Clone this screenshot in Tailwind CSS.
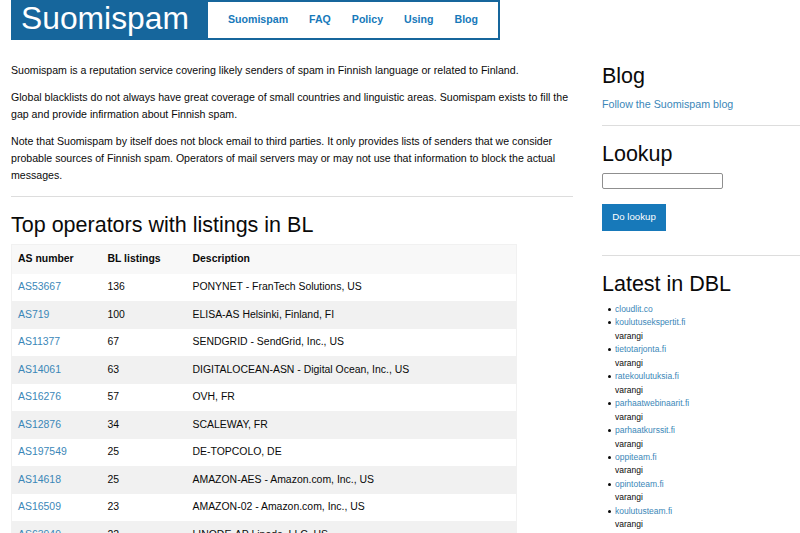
<!DOCTYPE html>
<html><head><meta charset="utf-8"><script src="https://cdn.jsdelivr.net/npm/@tailwindcss/browser@4"></script></head>
<body class="bg-white text-[#0a0a0a] font-['Liberation_Sans',Arial,sans-serif] text-[11px] h-[533px] overflow-hidden">
<div class="flex h-[533px] overflow-hidden pl-[11px] gap-[29px]">
<main class="w-[562px] shrink-0">
<header class="w-[489px] h-[40px] bg-[#16669c] flex items-center p-[2px] pr-[2px]">
<div class="w-[195px] text-white text-[31.8px] leading-[36px] pl-[8px] -mt-[4px]">Suomispam</div>
<nav class="flex-1 h-[36px] bg-white flex items-center gap-[21px] pl-[20px] text-[#1779ba] font-bold text-[10.6px]">
<a>Suomispam</a><a>FAQ</a><a>Policy</a><a>Using</a><a>Blog</a></nav>
</header>
<p class="mt-[22px] leading-[17px] text-[10.6px]">Suomispam is a reputation service covering likely senders of spam in Finnish language or related to Finland.</p>
<p class="mt-[10px] leading-[17px] text-[10.6px]">Global blacklists do not always have great coverage of small countries and linguistic areas. Suomispam exists to fill the gap and provide infirmation about Finnish spam.</p>
<p class="mt-[10px] leading-[17px] text-[10.6px]">Note that Suomispam by itself does not block email to third parties. It only provides lists of senders that we consider probable sources of Finnish spam. Operators of mail servers may or may not use that information to block the actual messages.</p>
<hr class="mt-[12px] border-[#dddddd]">
<h2 class="mt-[14px] text-[21.5px] leading-[29px]">Top operators with listings in BL</h2>
<table class="mt-[4px] w-[506px] border border-[#f1f1f1] border-collapse text-[10.45px] table-fixed">
<thead class="bg-[#f8f8f8]"><tr class="h-[29px]"><th class="w-[89px] text-left pl-[6px] font-bold">AS number</th><th class="w-[85px] text-left pl-[7px] font-bold">BL listings</th><th class="text-left pl-[7px] font-bold">Description</th></tr></thead>
<tbody>
<tr class="h-[27.5px]"><td class="pl-[6px] text-[#3b87b8]">AS53667</td><td class="pl-[7px]">136</td><td class="pl-[7px]">PONYNET - FranTech Solutions, US</td></tr>
<tr class="h-[27.5px] bg-[#f1f1f1]"><td class="pl-[6px] text-[#3b87b8]">AS719</td><td class="pl-[7px]">100</td><td class="pl-[7px]">ELISA-AS Helsinki, Finland, FI</td></tr>
<tr class="h-[27.5px]"><td class="pl-[6px] text-[#3b87b8]">AS11377</td><td class="pl-[7px]">67</td><td class="pl-[7px]">SENDGRID - SendGrid, Inc., US</td></tr>
<tr class="h-[27.5px] bg-[#f1f1f1]"><td class="pl-[6px] text-[#3b87b8]">AS14061</td><td class="pl-[7px]">63</td><td class="pl-[7px]">DIGITALOCEAN-ASN - Digital Ocean, Inc., US</td></tr>
<tr class="h-[27.5px]"><td class="pl-[6px] text-[#3b87b8]">AS16276</td><td class="pl-[7px]">57</td><td class="pl-[7px]">OVH, FR</td></tr>
<tr class="h-[27.5px] bg-[#f1f1f1]"><td class="pl-[6px] text-[#3b87b8]">AS12876</td><td class="pl-[7px]">34</td><td class="pl-[7px]">SCALEWAY, FR</td></tr>
<tr class="h-[27.5px]"><td class="pl-[6px] text-[#3b87b8]">AS197549</td><td class="pl-[7px]">25</td><td class="pl-[7px]">DE-TOPCOLO, DE</td></tr>
<tr class="h-[27.5px] bg-[#f1f1f1]"><td class="pl-[6px] text-[#3b87b8]">AS14618</td><td class="pl-[7px]">25</td><td class="pl-[7px]">AMAZON-AES - Amazon.com, Inc., US</td></tr>
<tr class="h-[27.5px]"><td class="pl-[6px] text-[#3b87b8]">AS16509</td><td class="pl-[7px]">23</td><td class="pl-[7px]">AMAZON-02 - Amazon.com, Inc., US</td></tr>
<tr class="h-[27.5px] bg-[#f1f1f1]"><td class="pl-[6px] text-[#3b87b8]">AS63949</td><td class="pl-[7px]">22</td><td class="pl-[7px]">LINODE-AP Linode, LLC, US</td></tr>
</tbody></table>
</main>
<aside class="flex-1 min-w-0">
<h3 class="mt-[62px] text-[21.5px] leading-[29px]">Blog</h3>
<a class="block mt-[5px] text-[#3b87b8] text-[10.7px] leading-[17px]">Follow the Suomispam blog</a>
<hr class="mt-[12px] border-[#dddddd]">
<h3 class="mt-[14px] text-[21.5px] leading-[29px]">Lookup</h3>
<input class="block mt-[4px] w-[121px] h-[16px] border border-[#8f8f8f] rounded-[2px] bg-white">
<button class="block mt-[15px] w-[64px] h-[27px] bg-[#1779ba] text-white text-[9.7px]">Do lookup</button>
<hr class="mt-[24px] border-[#dddddd]">
<h3 class="mt-[14px] text-[21.5px] leading-[29px]">Latest in DBL</h3>
<ul class="mt-[4px] pl-[13px] text-[8.5px] leading-[13.45px] [&>li]:relative [&>li]:before:absolute [&>li]:before:left-[-7.5px] [&>li]:before:top-[5px] [&>li]:before:w-[3px] [&>li]:before:h-[3px] [&>li]:before:rounded-full [&>li]:before:bg-[#0a0a0a] [&>li]:before:content-['']">
<li><a class="text-[#3b87b8]">cloudlit.co</a></li>
<li><a class="text-[#3b87b8]">koulutusekspertit.fi</a><br>varangi</li>
<li><a class="text-[#3b87b8]">tietotarjonta.fi</a><br>varangi</li>
<li><a class="text-[#3b87b8]">ratekoulutuksia.fi</a><br>varangi</li>
<li><a class="text-[#3b87b8]">parhaatwebinaarit.fi</a><br>varangi</li>
<li><a class="text-[#3b87b8]">parhaatkurssit.fi</a><br>varangi</li>
<li><a class="text-[#3b87b8]">oppiteam.fi</a><br>varangi</li>
<li><a class="text-[#3b87b8]">opintoteam.fi</a><br>varangi</li>
<li><a class="text-[#3b87b8]">koulutusteam.fi</a><br>varangi</li>
</ul>
</aside>
</div>
</body></html>
